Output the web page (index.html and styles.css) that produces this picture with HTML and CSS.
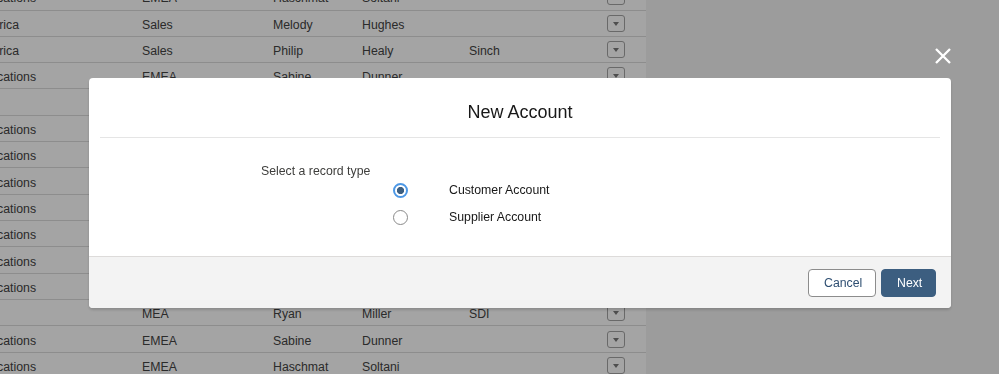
FILE: index.html
```html
<!DOCTYPE html>
<html lang="en">
<head>
    <meta charset="UTF-8">
    <meta name="viewport" content="width=device-width, initial-scale=1.0">
    <title>New Account</title>
    <link rel="stylesheet" href="styles.css">
</head>
<body>
    <!-- List view behind the dialog -->
    <table class="records">
        <colgroup>
            <col class="col-unit">
            <col class="col-region">
            <col class="col-first">
            <col class="col-last">
            <col class="col-company">
            <col class="col-action">
        </colgroup>
        <tbody>
            <tr><td>Communications</td><td>EMEA</td><td>Haschmat</td><td>Soltani</td><td></td><td><button class="row-menu"></button></td></tr>
            <tr><td>Latin America</td><td>Sales</td><td>Melody</td><td>Hughes</td><td></td><td><button class="row-menu"></button></td></tr>
            <tr><td>Latin America</td><td>Sales</td><td>Philip</td><td>Healy</td><td>Sinch</td><td><button class="row-menu"></button></td></tr>
            <tr><td>Communications</td><td>EMEA</td><td>Sabine</td><td>Dunner</td><td></td><td><button class="row-menu"></button></td></tr>
            <tr><td></td><td>APAC</td><td>Kenji</td><td>Tanaka</td><td></td><td><button class="row-menu"></button></td></tr>
            <tr><td>Communications</td><td>EMEA</td><td>Haschmat</td><td>Soltani</td><td></td><td><button class="row-menu"></button></td></tr>
            <tr><td>Communications</td><td>EMEA</td><td>Sabine</td><td>Dunner</td><td></td><td><button class="row-menu"></button></td></tr>
            <tr><td>Communications</td><td>EMEA</td><td>Haschmat</td><td>Soltani</td><td></td><td><button class="row-menu"></button></td></tr>
            <tr><td>Communications</td><td>EMEA</td><td>Sabine</td><td>Dunner</td><td></td><td><button class="row-menu"></button></td></tr>
            <tr><td>Communications</td><td>EMEA</td><td>Haschmat</td><td>Soltani</td><td></td><td><button class="row-menu"></button></td></tr>
            <tr><td>Communications</td><td>EMEA</td><td>Sabine</td><td>Dunner</td><td></td><td><button class="row-menu"></button></td></tr>
            <tr><td>Communications</td><td>EMEA</td><td>Haschmat</td><td>Soltani</td><td></td><td><button class="row-menu"></button></td></tr>
            <tr><td></td><td>MEA</td><td>Ryan</td><td>Miller</td><td>SDI</td><td><button class="row-menu"></button></td></tr>
            <tr><td>Communications</td><td>EMEA</td><td>Sabine</td><td>Dunner</td><td></td><td><button class="row-menu"></button></td></tr>
            <tr><td>Communications</td><td>EMEA</td><td>Haschmat</td><td>Soltani</td><td></td><td><button class="row-menu"></button></td></tr>
        </tbody>
    </table>

    <!-- Dimmed backdrop with the record type dialog -->
    <div class="backdrop">
        <div class="modal-wrap">
            <button class="modal-close" title="Close">
                <svg width="16" height="16" viewBox="0 0 16 16">
                    <path d="M1 1 L15 15 M15 1 L1 15" stroke="#fff" stroke-width="2.3" fill="none"/>
                </svg>
            </button>

            <section class="modal">
                <header class="modal-header">
                    <h2>New Account</h2>
                </header>

                <div class="modal-body">
                    <div class="field-label">Select a record type</div>
                    <fieldset class="record-types">
                        <label class="record-type">
                            <input type="radio" name="recordType" checked>
                            <span>Customer Account</span>
                        </label>
                        <label class="record-type">
                            <input type="radio" name="recordType">
                            <span>Supplier Account</span>
                        </label>
                    </fieldset>
                </div>

                <footer class="modal-footer">
                    <button class="btn btn-neutral">Cancel</button>
                    <button class="btn btn-brand">Next</button>
                </footer>
            </section>
        </div>
    </div>
</body>
</html>
```

FILE: styles.css
```css
/* Reset */
* {
    margin: 0;
    padding: 0;
    box-sizing: border-box;
}

body {
    font-family: "Liberation Sans", Arial, sans-serif;
    font-size: 12.3px;
    background: #f3f3f3;
    color: #434343;
    overflow: hidden;
    height: 374px;
}

/* Background list view */
.records {
    table-layout: fixed;
    border-collapse: collapse;
    width: 709.5px;
    margin: -16.33px 0 0 -63.5px;
    background: #fff;
}

.col-unit { width: 197.5px; }
.col-region { width: 131px; }
.col-first { width: 89px; }
.col-last { width: 107px; }
.col-company { width: 129px; }
.col-action { width: 56px; }

.records tr {
    height: 26.33px;
    border-bottom: 1px solid #dcdcdc;
}

.records td {
    padding: 3px 0 0 8px;
    white-space: nowrap;
    overflow: hidden;
    vertical-align: middle;
}

.records td:last-child {
    padding: 0 0 0 17px;
}

/* Small dropdown trigger at the end of each row */
.row-menu {
    display: block;
    width: 18px;
    height: 17px;
    border: 1px solid #a3a3a3;
    border-radius: 3px;
    background: #fff;
    position: relative;
}

.row-menu::after {
    content: "";
    position: absolute;
    left: 5px;
    top: 6px;
    border-left: 3.5px solid transparent;
    border-right: 3.5px solid transparent;
    border-top: 4px solid #7a7a7a;
}

/* Overlay that dims the page */
.backdrop {
    position: fixed;
    inset: 0;
    background: rgba(0, 0, 0, 0.357);
}

.modal-wrap {
    width: 862px;
    margin: 48px 0 0 89px;
    display: flex;
    flex-direction: column;
}

.modal-close {
    align-self: flex-end;
    width: 16px;
    height: 16px;
    margin-bottom: 14px;
    border: none;
    background: none;
    display: flex;
}

.modal {
    background: #fff;
    border-radius: 4px;
    box-shadow: 0 2px 3px rgba(0, 0, 0, 0.16);
}

.modal-header {
    margin: 0 11px;
    padding: 23px 0 14px;
    border-bottom: 1px solid #e5e5e5;
    text-align: center;
}

.modal-header h2 {
    font-size: 18px;
    font-weight: normal;
    line-height: 22px;
    color: #181818;
}

/* Label on the left, radio group offset to the right */
.modal-body {
    display: grid;
    grid-template-columns: 132px 1fr;
    align-items: start;
    padding: 26px 0 26px 172px;
}

.field-label {
    line-height: 14px;
    color: #3e3e3c;
    white-space: nowrap;
}

.record-types {
    border: none;
    margin-top: 13px;
    display: flex;
    flex-direction: column;
    gap: 1px;
}

.record-type {
    display: flex;
    align-items: center;
    height: 26px;
    color: #181818;
}

.record-type input {
    appearance: none;
    width: 15px;
    height: 15px;
    border: 1px solid #8a8a8a;
    border-radius: 50%;
    background: #fff;
    margin-right: 41px;
}

.record-type input:checked {
    border: 2px solid #4d98e6;
    background: radial-gradient(circle, #3c5e80 3.3px, #fff 3.9px);
}

.modal-footer {
    display: flex;
    justify-content: flex-end;
    gap: 5px;
    padding: 12px 15px 11px;
    background: #f3f3f3;
    border-top: 1px solid #dddbda;
    border-radius: 0 0 4px 4px;
}

.btn {
    height: 28px;
    padding: 0 15px;
    border-radius: 4px;
    font-family: inherit;
    font-size: 12.3px;
}

.btn-neutral {
    width: 68px;
    background: #fff;
    border: 1px solid #8c8c8c;
    color: #2f4f72;
}

.btn-brand {
    width: 55px;
    background: #3c5e80;
    border: 1px solid #3c5e80;
    color: #fff;
}
```
